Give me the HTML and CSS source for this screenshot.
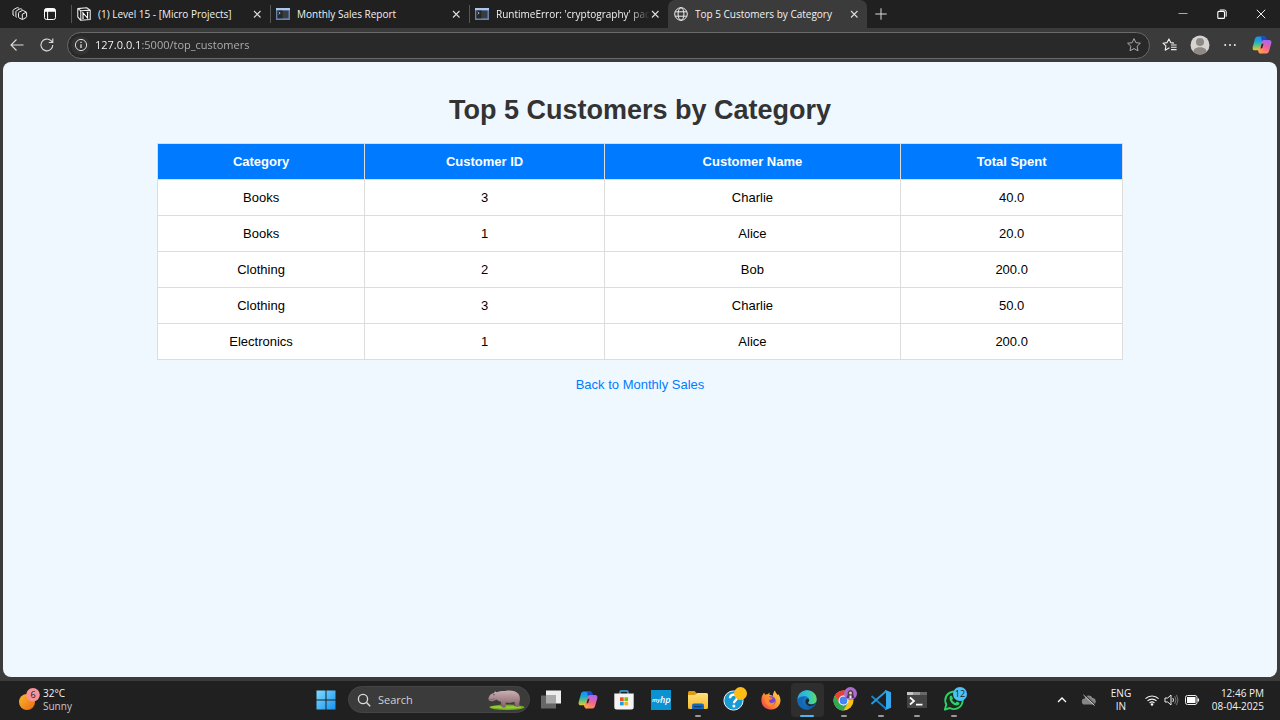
FILE: index.html
```html
<!DOCTYPE html>
<html lang="en">
<head>
<meta charset="utf-8">
<title>Top 5 Customers by Category</title>
<link rel="stylesheet" href="styles.css">
</head>
<body>
<svg class="defs" aria-hidden="true">
  <defs>
    <linearGradient id="cpA" x1="0" y1="0" x2="0" y2="1"><stop offset="0" stop-color="#1f8ff0"/><stop offset=".35" stop-color="#1ba5d8"/><stop offset=".65" stop-color="#5fc27a"/><stop offset="1" stop-color="#f4c62c"/></linearGradient>
    <linearGradient id="cpB" x1=".6" y1="0" x2=".3" y2="1"><stop offset="0" stop-color="#a767f0"/><stop offset=".5" stop-color="#f0629a"/><stop offset="1" stop-color="#ff9454"/></linearGradient>
    <linearGradient id="win" x1="0" y1="0" x2="1" y2="1"><stop offset="0" stop-color="#7fdcff"/><stop offset="1" stop-color="#1593f0"/></linearGradient>
    <linearGradient id="sun" x1="0" y1="0" x2="1" y2="1"><stop offset="0" stop-color="#fbb832"/><stop offset="1" stop-color="#ec6a10"/></linearGradient>
    <linearGradient id="fold" x1="0" y1="0" x2="0" y2="1"><stop offset="0" stop-color="#ffe07a"/><stop offset="1" stop-color="#f8b92c"/></linearGradient>
    <linearGradient id="edgeTop" x1="0" y1="0" x2="1" y2="0"><stop offset="0" stop-color="#2aa6e6"/><stop offset=".6" stop-color="#35c6c6"/><stop offset="1" stop-color="#62dc58"/></linearGradient>
    <linearGradient id="edgeLow" x1="0" y1="0" x2="1" y2="1"><stop offset="0" stop-color="#2492e0"/><stop offset="1" stop-color="#0d4f94"/></linearGradient>
    <linearGradient id="fox" x1="1" y1="0" x2="0" y2="1"><stop offset="0" stop-color="#ffe14a"/><stop offset=".5" stop-color="#ff9330"/><stop offset="1" stop-color="#ef3358"/></linearGradient>
    <linearGradient id="hippo" x1="0" y1="0" x2="0" y2="1"><stop offset="0" stop-color="#cdb0b2"/><stop offset="1" stop-color="#7e5f66"/></linearGradient>
    <symbol id="copilot" viewBox="0 0 20 20">
      <path fill="url(#cpA)" d="M5.500 1.500h6.300c1.300 0 1.700.8 1.400 1.800L10.500 13c-.4 1.500-1.300 2.300-2.700 2.300H3C1 15.300.2 13.800.7 11.900L2.900 4C3.300 2.400 4.200 1.500 5.500 1.500z"/>
      <path fill="#174bd0" d="M9 1.500h3.200c1.500 0 2.100.9 2.500 2.200l.5 1.500h-2.900l-1.600 5.300z"/>
      <path fill="url(#cpB)" d="M12.200 4.900H17c2 0 2.800 1.400 2.300 3.300l-2.200 7.700c-.4 1.600-1.300 2.500-2.700 2.500H8.300c-1.200 0-1.600-.8-1.300-1.800l2.600-9.300c.4-1.600 1.200-2.400 2.600-2.400z"/>
      <path fill="#ff9a4c" d="M5.800 15.100h4.100l1.700-5-1.300 6.300c-.3 1.300-.9 2-2 2-1.700 0-2-1.500-2.500-3.300z"/>
      <path fill="#252525" d="M9.800 8.800h1.700l-1.300 4.400H8.600z"/>
    </symbol>
    <symbol id="close" viewBox="0 0 10 10"><path d="M2 2l6.500 6.500m0-6.500L2 8.500" fill="none" stroke="currentColor" stroke-width="1.100"/></symbol>
    <symbol id="terminal" viewBox="0 0 14 14"><path fill="#6583ae" d="M0 1h14v12H0z"/><path fill="#a9c7ef" d="M0 1h14v2.200H0z"/><path fill="#3a3d40" d="M1.500 3.600h11v7.700h-11z"/><path fill="#25282b" d="M1.500 3.600h5v7.700h-5z"/><path d="M2.700 5l1.500 1.100-1.500 1.100" fill="none" stroke="#ccc" stroke-width=".8"/></symbol>
    <symbol id="star" viewBox="0 0 16 16"><path d="M8 1.600l1.900 4.100 4.500.5-3.300 3.100.9 4.500L8 11.600l-4 2.200.9-4.500L1.600 6.200l4.500-.5z" fill="none" stroke="currentColor" stroke-linejoin="round"/></symbol>
  </defs>
</svg>

<div class="desktop">
  <header class="browser">
    <div class="tabbar">
      <div class="tab-tools">
        <button class="icon-btn" aria-label="Workspaces"><svg class="i16" viewBox="0 0 16 16"><g fill="none" stroke="currentColor" stroke-linejoin="round"><path d="M6.500 7.300q0-.8.700-1.200l2.900-1.500q.6-.3 1.200 0l2.700 1.300q.6.300.6 1v3.700q0 .7-.6 1l-3.100 1.700q-.6.300-1.100 0l-2.700-1.400q-.6-.3-.6-1zM10.300 8.200v5M10.300 8.200l4-2"/><path d="M4.600 11.300l-.7-.4V5.600q0-.6.600-.9l3.400-1.800q.6-.3 1.200 0l1.300.6M2.200 9.700L1 9V4.500q0-.6.600-.9l3.300-1.800q.6-.3 1.200 0l1 .5"/></g></svg></button>
        <button class="icon-btn" aria-label="Tab actions"><svg class="i16" viewBox="0 0 16 16"><rect x="2.500" y="2.500" width="11" height="11" rx="2" fill="none" stroke="#fff"/><path fill="#fff" d="M2.500 4.500a2 2 0 0 1 2-2h7a2 2 0 0 1 2 2v1.300h-11z"/><path d="M5.600 5v8" stroke="#fff"/></svg></button>
      </div>
      <div class="tab">
        <svg class="i14" viewBox="0 0 14 14"><path fill="#151515" stroke="#eee" stroke-width="1.100" stroke-linejoin="round" d="M.8 1.600L9.700.8l3.500 2.300v9.400l-9.500.8L.8 9.900zM.8 1.600l3 2.200v9.400M3.800 3.800l9.300-.7"/><path d="M6 11.200V6l4.600 5V5.400M5.300 5.800h1.300M5.200 11.200h1.700M9.700 5.400h1.700" fill="none" stroke="#fff" stroke-width="1.100"/></svg>
        <span class="title">(1) Level 15 - [Micro Projects]</span>
        <button class="tab-close" aria-label="Close tab"><svg class="i10"><use href="#close"/></svg></button>
      </div>
      <div class="tab">
        <svg class="i14"><use href="#terminal"/></svg>
        <span class="title">Monthly Sales Report</span>
        <button class="tab-close" aria-label="Close tab"><svg class="i10"><use href="#close"/></svg></button>
      </div>
      <div class="tab">
        <svg class="i14"><use href="#terminal"/></svg>
        <span class="title faded">RuntimeError: 'cryptography' pac</span>
        <button class="tab-close" aria-label="Close tab"><svg class="i10"><use href="#close"/></svg></button>
      </div>
      <div class="tab active">
        <svg class="i14" viewBox="0 0 14 14"><g fill="none" stroke="#eee"><circle cx="7" cy="7" r="6.300"/><ellipse cx="7" cy="7" rx="2.900" ry="6.300"/><path d="M1.200 4.800h11.600M1.200 9.200h11.600"/></g></svg>
        <span class="title">Top 5 Customers by Category</span>
        <button class="tab-close" aria-label="Close tab"><svg class="i10"><use href="#close"/></svg></button>
      </div>
      <button class="icon-btn new-tab" aria-label="New tab"><svg class="i16" viewBox="0 0 16 16"><path d="M8 2.300v11.400M2.300 8h11.400" stroke="#ddd"/></svg></button>
      <div class="window-controls">
        <button aria-label="Minimize"><svg class="i10" viewBox="0 0 10 10"><path d="M.5 4.500h9" stroke="#aaa"/></svg></button>
        <button aria-label="Restore"><svg class="i10" viewBox="0 0 10 10"><rect x=".8" y="2.400" width="6.700" height="7" rx="1" fill="none" stroke="#fff" stroke-width="1.100"/><path d="M2.800 1h4.600Q9.200 1 9.200 2.800v4.900" fill="none" stroke="#fff"/></svg></button>
        <button aria-label="Close window"><svg class="i10" viewBox="0 0 10 10"><path d="M.8.8l8.400 8.400m0-8.400L.8 9.200" stroke="#eee"/></svg></button>
      </div>
    </div>
    <div class="toolbar">
      <button class="icon-btn" aria-label="Back"><svg class="i16" viewBox="0 0 16 16"><path d="M14.500 8H2M7.500 2.500L2 8l5.500 5.500" fill="none" stroke="#ddd" stroke-width="1.100"/></svg></button>
      <button class="icon-btn" aria-label="Refresh"><svg class="i16" viewBox="0 0 16 16"><path d="M13.800 8A5.900 5.900 0 1 1 12 3.700L13.600 5.300M13.800 1.500v4H9.700" fill="none" stroke="#ddd" stroke-width="1.100"/></svg></button>
      <div class="address">
        <button class="info" aria-label="Site information"><svg class="i14" viewBox="0 0 14 14"><circle cx="7" cy="7" r="5.600" fill="none" stroke="#ddd"/><path d="M7 6.200v3.900M7 3.800v1.200" stroke="#eee" stroke-width="1.200"/></svg></button>
        <input class="url" type="text" aria-label="Address" value="127.0.0.1:5000/top_customers">
        <button class="icon-btn fav" aria-label="Add to favorites"><svg class="i16"><use href="#star"/></svg></button>
      </div>
      <div class="toolbar-end">
        <button class="icon-btn" aria-label="Favorites"><svg class="i16" viewBox="0 0 16 16"><path d="M7.500 11.300l-.6-.3-3.700 2.200.7-4.300L1 6.200l4.100-.6 1.800-3.700 1.800 3.700 3.300.5M9 8h5.600M9 10.300h5.600M9 12.600h5.600" fill="none" stroke="#eee" stroke-width="1.100" stroke-linejoin="round"/></svg></button>
        <button class="icon-btn" aria-label="Profile"><svg class="i20" viewBox="0 0 20 20"><circle cx="10" cy="10" r="9.500" fill="#d6d3d0"/><circle cx="10" cy="7" r="4" fill="#8d8985"/><path fill="#8d8985" d="M3.500 17c0-3.200 2.500-4.700 6.500-4.700s6.500 1.500 6.500 4.700A9.500 9.500 0 0 1 3.500 17z"/></svg></button>
        <button class="icon-btn" aria-label="Settings"><svg class="i16" viewBox="0 0 16 16"><g fill="#eee"><circle cx="3.200" cy="8" r="1"/><circle cx="8" cy="8" r="1"/><circle cx="12.800" cy="8" r="1"/></g></svg></button>
        <button class="icon-btn copilot-btn" aria-label="Copilot"><svg class="i20"><use href="#copilot"/></svg></button>
      </div>
    </div>
  </header>

  <main class="page">
    <h1>Top 5 Customers by Category</h1>
    <table class="customers">
      <colgroup><col class="c-category"><col class="c-id"><col class="c-name"><col class="c-total"></colgroup>
      <thead><tr><th>Category</th><th>Customer ID</th><th>Customer Name</th><th>Total Spent</th></tr></thead>
      <tbody>
        <tr><td>Books</td><td>3</td><td>Charlie</td><td>40.0</td></tr>
        <tr><td>Books</td><td>1</td><td>Alice</td><td>20.0</td></tr>
        <tr><td>Clothing</td><td>2</td><td>Bob</td><td>200.0</td></tr>
        <tr><td>Clothing</td><td>3</td><td>Charlie</td><td>50.0</td></tr>
        <tr><td>Electronics</td><td>1</td><td>Alice</td><td>200.0</td></tr>
      </tbody>
    </table>
    <a class="back" href="#">Back to Monthly Sales</a>
  </main>

  <footer class="taskbar">
    <button class="weather" aria-label="Weather">
      <svg class="sun" viewBox="0 0 24 24"><circle cx="9" cy="14" r="8" fill="url(#sun)"/><circle cx="15" cy="6.800" r="6.800" fill="#f6949b"/><text class="badge-text" x="15" y="10" text-anchor="middle">6</text></svg>
      <span class="stack"><span>32°C</span><span class="dim">Sunny</span></span>
    </button>
    <div class="task-center">
      <button class="app start" aria-label="Start"><svg class="i20" viewBox="0 0 20 20"><path fill="url(#win)" d="M.5.500h9v9h-9zM10.500.500h9v9h-9zM.5 10.500h9v9h-9zM10.500 10.500h9v9h-9z"/></svg></button>
      <label class="search">
        <svg class="i14" viewBox="0 0 14 14"><circle cx="6" cy="6" r="4.600" fill="none" stroke="#ddd" stroke-width="1.300"/><path d="M9.300 9.300l3.900 3.900" stroke="#ddd" stroke-width="1.400"/></svg>
        <input type="text" placeholder="Search" aria-label="Search">
        <svg class="hippo" viewBox="0 0 38 22"><ellipse cx="20" cy="18.300" rx="17.500" ry="2.700" fill="#73ad20"/><path fill="#96ce30" d="M3 18c5-2 9-.6 14-.5s12-1 18 .7c-5 1.700-26 2-32-.2z"/><path fill="#665058" d="M14 11h4v6h-4zM27 10h4v7h-4z"/><path fill="url(#hippo)" d="M2 8c.6-2.600 3-3.200 5-4l1-1.700 1.600 1C12 2 15 1.800 18 1.900c5-.8 11-.4 13.600 3.200 1.900 3 1.400 6.600.7 8.700l-.2 4h-3.600l-.6-5c-3.300 1.300-6.200 1.300-9.100.8l-.2 4.800H15l-1.100-5.700c-2-.4-3.600-1.500-4.700-2.200-2 1.800-5.900 2.500-7.300.8-.7-1-.5-2.300.1-3.300z"/><circle cx="7" cy="5.700" r=".6" fill="#3a2a30"/><path d="M2 10.500c2 .6 4.300.2 6-1.200" fill="none" stroke="#7a5962" stroke-width=".7"/></svg>
      </label>
      <nav class="apps" aria-label="Pinned apps">
        <button class="app" aria-label="Task view"><svg class="i20" viewBox="0 0 20 20"><path fill="#eee" d="M5 .500h15v13H5z"/><path fill="#666" d="M0 5.500h15v13H0z"/><path fill="#aaa" d="M5 5.500h10v8H5z"/></svg></button>
        <button class="app" aria-label="Copilot"><svg class="i20"><use href="#copilot"/></svg></button>
        <button class="app" aria-label="Microsoft Store"><svg class="i20" viewBox="0 0 20 20"><path d="M6 5V2q0-1 1-1h6q1 0 1 1v3" fill="none" stroke="#3caee8" stroke-width="1.300"/><path fill="#f4f4f4" d="M.3 3.600h19.400v13.400q0 2.500-2.500 2.500H2.800Q.3 19.500.3 17z"/><path fill="#ef5020" d="M6 7.300h3.700V11H6z"/><path fill="#80b918" d="M10.400 7.300h3.700V11h-3.700z"/><path fill="#1aa0ea" d="M6 11.700h3.700v3.700H6z"/><path fill="#f6b717" d="M10.400 11.700h3.700v3.700h-3.700z"/></svg></button>
        <button class="app" aria-label="myHP"><svg class="i20" viewBox="0 0 20 20"><path fill="#0b92d0" d="M0 0h20v20H0z"/><text class="hp-small" x="1" y="12">my</text><text class="hp-big" x="9" y="13">hp</text></svg></button>
        <button class="app running" aria-label="File Explorer"><svg class="i20" viewBox="0 0 20 20"><path fill="#dd9b13" d="M0 2.500Q0 1 1.500 1h5L8.500 3v4H0z"/><path fill="url(#fold)" d="M0 5h7l2-2h9.500Q20 3 20 4.500v13q0 1.500-1.500 1.500h-17Q0 19 0 17.500z"/><path fill="#1568b8" d="M4 19v-3.500q0-2 2-2h8q2 0 2 2V19z"/><path fill="#0b3c78" d="M6 16h8v1.300H6z"/></svg></button>
        <button class="app" aria-label="Get Help"><svg class="i26" viewBox="0 0 26 26"><circle cx="12.500" cy="13.500" r="9.600" fill="#179bd5" stroke="#e7f4fa"/><path d="M9 11.200c0-5 7.300-4.600 7.100-.5-.1 2.700-3.200 2.500-3.200 5.600" fill="none" stroke="#fff" stroke-width="2.300"/><circle cx="12.900" cy="19" r="1.500" fill="#fff"/><circle cx="19.500" cy="6.500" r="6.500" fill="#ffbd13"/></svg></button>
        <button class="app" aria-label="Firefox"><svg class="i20" viewBox="0 0 20 20"><path fill="url(#fox)" d="M1 6l2-3.300 1.300 2L7 4l1.500-1.500V5c1.300 0 2.700.4 3.300.9C12 4 12.500 1.600 14 .500c.2 2 1.700 3 2.700 4.600l.6-.9c2 2.500 2.600 5.700 1.800 8.500C18 16.800 14.600 19.500 10 19.500S1.600 16.800.7 12.700C.2 10.500.4 8 1 6z"/><circle cx="10" cy="11" r="4.700" fill="#7547d8"/><path fill="#ff8a2b" d="M4 6.800c2-.8 4-.4 5.600.6l2 .4c-.3 1.300-1.500 1.700-2.900 2-1 .3-.7 2.600 1.200 3.100 2 .5 3.400-.5 4.200-1.900-.3 3.500-2.300 5-4.800 5C5.700 16 4 12.700 4 9.700z"/></svg></button>
        <button class="app running current" aria-label="Microsoft Edge"><svg class="i20" viewBox="0 0 20 20"><circle cx="10" cy="10" r="9.700" fill="url(#edgeLow)"/><path fill="url(#edgeTop)" d="M.4 9C1 4 5 .3 10 .3c5.700 0 9.700 4.200 9.700 8.900 0 3.300-2.600 5.200-5.400 5.200-2.400 0-3.500-.8-3.300-1.600.1-.6 1.200-1 1.200-2.700C12.200 7.700 10 6 7 6 3.800 6 1.500 7.200.4 9z"/><path fill="#1368b4" d="M7.500 8.200C6 9.300 5.700 11 6 12.600c.5 3.300 3.300 6.100 7.200 6.500-6 2-12.200-2-12.600-8.200C.8 8.300 4 6.800 7 7c1.200.1.9.9.500 1.200z"/><path fill="#262626" d="M12.200 10.100c0 1.700-1.100 2.100-1.200 2.700-.2.800.9 1.600 3.300 1.600 1.700 0 3-.6 4.100-1.600-.9 1.700-2.800 3.400-5.200 3.300-3.200-.2-5.300-3-4.600-5.500.5-1.900 2.700-2.500 3.600-.5z"/></svg></button>
        <button class="app running" aria-label="Chrome"><svg class="i26" viewBox="0 0 26 26"><circle cx="12.500" cy="13.500" r="10" fill="#fbc116"/><path fill="#e94235" d="M3.800 8.500A10 10 0 0 1 21.200 8.500H12.500l-4.300 7.500z"/><path fill="#33a853" d="M3.800 8.500l4.400 7.500 4.300 2.500 4.300-2.500-4.300 7.500A10 10 0 0 1 3.800 8.500z"/><circle cx="12.500" cy="13.500" r="5" fill="#fff"/><circle cx="12.500" cy="13.500" r="3.900" fill="#4285f4"/><circle cx="19.500" cy="6.500" r="6.500" fill="#ad6bd0"/><path fill="#4d3d45" d="M16.700 7.500V5q2.800-4 5.600 0v2.500l1.200 3.500h-8z"/><circle cx="19.500" cy="6" r="1.500" fill="#e3c3b4"/><path fill="#eee" d="M18.500 8.500h2v3h-2z"/></svg></button>
        <button class="app running" aria-label="Visual Studio Code"><svg class="i20" viewBox="0 0 20 20"><path fill="#1781c9" d="M1.700 5.800L15 17.500V20L.4 7.200c-.5-.5-.4-.9 0-1.200l.6-.4q.3-.2.700.2z"/><path fill="#209de4" d="M1.700 14.200L15 2.500V0L.4 12.800c-.5.500-.4.900 0 1.200l.6.4q.3.200.7-.2z"/><path fill="#35a9ed" d="M14.500 0L20 2.200v15.600L14.500 20l-.9-.6 1.400-.8V1.400L13.600.6z"/></svg></button>
        <button class="app running" aria-label="Terminal"><svg class="i20" viewBox="0 0 20 20"><path fill="#444" d="M0 2h20v16H0z"/><path fill="#c6c6c6" d="M0 2h6v3H0z"/><path fill="#999" d="M6 2h7v3H6z"/><path fill="#696969" d="M13 2h7v3h-7z"/><path d="M3 7.500l4 3.500-4 3.500M9 14.700h6.500" fill="none" stroke="#fff" stroke-width="1.700"/></svg></button>
        <button class="app running" aria-label="WhatsApp"><svg class="i26" viewBox="0 0 26 26"><path d="M3.900 22.600L5.300 17.500A8.700 8.700 0 1 1 8.800 21z" fill="#202820" stroke="#2bd366" stroke-width="1.900" stroke-linejoin="round"/><path fill="#2bd366" d="M9 9l1.700-.5 1.300 3-.9 1.400c.8 1.500 1.900 2.400 3.300 3l1.400-1.400 2.700 1.300c.2 2-1.500 2.700-2.900 2.700-4.200-.2-8.500-5.500-6.600-9.500z"/><circle cx="19" cy="7" r="7" fill="#4cc2fa"/><text class="badge-text" x="19" y="10" text-anchor="middle">12</text></svg></button>
      </nav>
    </div>
    <div class="tray">
      <button class="icon-btn" aria-label="Show hidden icons"><svg class="i16" viewBox="0 0 16 16"><path d="M4 10l4-4 4 4" fill="none" stroke="#fff" stroke-width="1.300"/></svg></button>
      <button class="icon-btn cloud" aria-label="OneDrive"><svg class="i16" viewBox="0 0 16 16"><path fill="#858585" d="M4 12.500a3 3 0 0 1-.3-6C4.500 2.800 10 2.500 11.500 6c4-.3 4.500 6.500.5 6.500z"/><path d="M3.300 2.300l11 10.500" stroke="#222"/><path d="M2.500 3l11 10.500" stroke="#ccc"/></svg></button>
      <button class="stack lang"><span>ENG</span><span>IN</span></button>
      <button class="status" aria-label="Network, volume and battery">
        <svg class="i16" viewBox="0 0 16 16"><g fill="none" stroke="#eee" stroke-width="1.200"><path d="M1.500 6.700a9.200 9.200 0 0 1 13 0M3.500 8.900a6.400 6.400 0 0 1 9 0M5.600 11a3.500 3.500 0 0 1 4.800 0"/></g><circle cx="8" cy="12.500" r="1.200" fill="#fff"/></svg>
        <svg class="i16" viewBox="0 0 16 16"><path d="M2 6h2.700L8 3v10l-3.300-3H2z" fill="none" stroke="#eee" stroke-linejoin="round"/><path d="M9.800 6q1.400 2 0 4" fill="none" stroke="#eee"/><path d="M11.700 4.200q2.700 3.800 0 7.600M13.500 2.900q3 5.100 0 10.200" fill="none" stroke="#777"/></svg>
        <svg class="i16 battery" viewBox="0 0 16 16"><rect x="1.500" y="3.500" width="11.500" height="9" rx="2" fill="none" stroke="#eee"/><rect x="3" y="5" width="8.500" height="6" fill="#fff"/><path d="M14.300 6.500v3" stroke="#eee" stroke-width="1.500"/></svg>
      </button>
      <button class="stack clock"><span>12:46 PM</span><span>08-04-2025</span></button>
    </div>
  </footer>
</div>
</body>
</html>
```
FILE: styles.css
```css
* { box-sizing: border-box; }
body { margin: 0; background: #3b3b3b; font-family: "Open Sans", "Noto Sans", sans-serif; font-size: 10px; color: #f2f2f2; }
button { border: 0; padding: 0; margin: 0; background: none; color: inherit; font: inherit; }
input { border: 0; padding: 0; margin: 0; outline: 0; min-width: 0; background: none; font: inherit; color: inherit; }
svg { display: block; flex: none; }
.defs { position: absolute; width: 0; height: 0; }
.i10 { width: 10px; height: 10px; }
.i14 { width: 14px; height: 14px; }
.i16 { width: 16px; height: 16px; }
.i20 { width: 20px; height: 20px; }
.i26 { width: 26px; height: 26px; }

.desktop { min-height: 100vh; display: flex; flex-direction: column; }
.icon-btn { display: grid; place-items: center; flex: none; }

/* Tab strip */
.tabbar { display: flex; align-items: stretch; height: 28px; background: #202020; }
.tab-tools { display: flex; gap: 14px; padding: 0 12px; width: 71px; flex: none; }
.tab { display: flex; align-items: center; flex: 0 1 199px; min-width: 0; padding: 0 8px 1px 5px; border-left: 1px solid transparent; border-image: linear-gradient(transparent 5px, #555 5px, #555 23px, transparent 23px) 0 0 0 1; }
.title { flex: 1; min-width: 0; margin-left: 7px; overflow: hidden; white-space: nowrap; line-height: 16px; }
.faded { -webkit-mask-image: linear-gradient(90deg, #000 calc(100% - 20px), transparent); mask-image: linear-gradient(90deg, #000 calc(100% - 20px), transparent); }
.tab-close { color: #ddd; }
.tab.active { border-image: none; border-radius: 7px 7px 0 0; background: #3b3b3b; }
.new-tab { width: 28px; }
.window-controls { display: flex; align-items: center; gap: 29px; margin-left: auto; padding-right: 14px; }

/* Toolbar */
.toolbar { display: flex; align-items: center; height: 34px; padding: 0 8px 0 9px; background: #3b3b3b; }
.toolbar > .icon-btn { margin-right: 14px; }
.toolbar > .icon-btn + .icon-btn { margin-right: 12px; }
.address { flex: 1; display: flex; align-items: center; height: 27px; padding: 0 7px 0 3px; border: 1px solid #6a6a6a; border-radius: 14px; background: #292929; }
.info { display: grid; place-items: center; width: 19px; height: 19px; border-radius: 10px; background: #333; }
.url { flex: 1; margin-left: 5px; padding-bottom: 1px; font-size: 11px; background: linear-gradient(90deg, #fff 45px, #b5b5b5 45px); -webkit-background-clip: text; background-clip: text; color: transparent; }
.fav { color: #aaa; }
.toolbar-end { display: flex; align-items: center; gap: 12px; margin-left: 12px; }
.copilot-btn { margin-left: 2px; }

/* Web page */
.page { flex: 1; margin: 0 3px 4px; padding: 33px; border-radius: 8px; background: #f0f8ff; color: #000; font-family: "Liberation Sans", Arial, sans-serif; font-size: 13px; line-height: 15px; text-align: center; }
h1 { margin: 0 0 17px; color: #333; font-size: 27px; line-height: 31px; }
.customers { width: 80%; margin: 0 auto 17px; border-collapse: collapse; background: #fff; }
.customers th, .customers td { padding: 10px; border: 1px solid #ddd; }
.customers th { background: #007bff; color: #fff; }
.c-category { width: 21.5%; }
.c-id { width: 24.8%; }
.c-name { width: 30.7%; }
.c-total { width: 23%; }
.back { color: #007bff; text-decoration: none; }

/* Taskbar */
.taskbar { display: grid; grid-template-columns: 1fr auto 1fr; height: 39px; padding-bottom: 2px; background: #202020; }
.stack { display: flex; flex-direction: column; line-height: 13px; }
.dim { color: #c8c8c8; }
.weather { display: flex; align-items: center; justify-self: start; gap: 1px; padding-left: 18px; text-align: left; }
.sun { width: 24px; height: 24px; }
.badge-text { font-size: 9px; fill: #222; }
.task-center { display: flex; align-items: center; }
.app { position: relative; display: grid; place-items: center; height: 34px; }
.start { width: 36px; margin-right: 4px; }
.search { display: flex; align-items: center; width: 182px; height: 27px; margin-right: 3px; padding: 0 4px 0 8px; border: 1px solid #454545; border-radius: 14px; background: #3b3b3b; }
.search input { flex: 1; margin-left: 7px; font-size: 11px; }
.search input::placeholder { color: #d0d0d0; opacity: 1; }
.hippo { width: 38px; height: 22px; }
.apps { display: grid; grid-template-columns: repeat(12, 1fr); width: 439px; }
.running::after { content: ""; position: absolute; bottom: 0; left: calc(50% - 3px); width: 6px; height: 2px; border-radius: 1px; background: #999; }
.current { margin: 0 2px; border-radius: 4px; background: #2e2e2e; }
.current::after { left: calc(50% - 7px); width: 14px; background: #4cb8f0; }
.hp-small { font-size: 6px; font-style: italic; font-weight: 600; fill: #fff; }
.hp-big { font-size: 9px; font-style: italic; font-weight: 600; fill: #fff; }
.tray { display: flex; align-items: center; justify-content: flex-end; padding-right: 16px; }
.cloud { margin-left: 11px; }
.lang { width: 28px; margin-left: 10px; text-align: center; }
.status { display: flex; align-items: center; gap: 3px; margin-left: 9px; }
.battery { margin-left: 2px; }
.clock { width: 64px; text-align: right; }
```
